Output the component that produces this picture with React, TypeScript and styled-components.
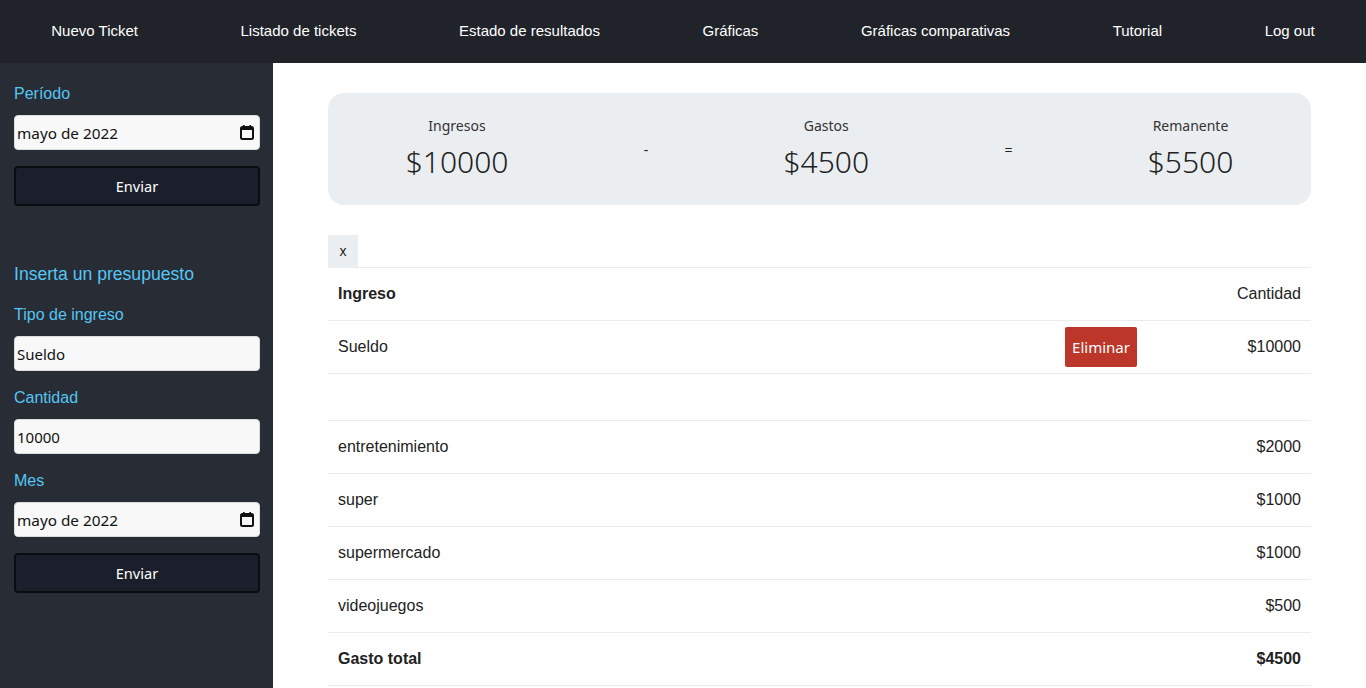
import React from "react";
import styled, { createGlobalStyle } from "styled-components";

const Global = createGlobalStyle`
  html, body { margin: 0; padding: 0; background: #ffffff; }
  body { font-family: "Liberation Sans", Arial, sans-serif; }
  * { box-sizing: border-box; }
`;

const Page = styled.div`
  display: grid;
  grid-template-rows: 63px 1fr;
  min-height: 100vh;
`;

const NavBar = styled.nav`
  background: #20232a;
  display: flex;
  justify-content: space-around;
  align-items: center;
  height: 63px;
`;

const NavLink = styled.a`
  color: #ffffff;
  font-family: "Liberation Sans", Arial, sans-serif;
  font-size: 15px;
  line-height: 18px;
  text-decoration: none;
  cursor: pointer;
  padding-bottom: 2px;
`;

const Body = styled.div`
  display: grid;
  grid-template-columns: 273px 1fr;
`;

const Sidebar = styled.aside`
  background: #282c34;
  padding: 20px 13px 20px 14px;
  display: flex;
  flex-direction: column;
`;

const Form = styled.form`
  display: flex;
  flex-direction: column;
`;

const Heading = styled.h3`
  margin: 57px 0 19px;
  font-family: "Liberation Sans", Arial, sans-serif;
  font-weight: normal;
  font-size: 17.6px;
  line-height: 22px;
  color: #55c6f5;
`;

const Label = styled.label`
  font-family: "Liberation Sans", Arial, sans-serif;
  font-size: 16px;
  line-height: 22px;
  color: #55c6f5;
  margin-bottom: 10px;
`;

const Input = styled.input`
  width: 246px;
  height: 35px;
  border: 1px solid #dcdcdc;
  border-radius: 4px;
  background: #f8f8f8;
  padding: 0 2px;
  font-family: "Noto Sans", "Open Sans", sans-serif;
  font-size: 15px;
  color: #111;
  margin-bottom: 16px;
  outline: none;
`;

const MonthBox = styled.div`
  width: 246px;
  height: 35px;
  border: 1px solid #dcdcdc;
  border-radius: 4px;
  background: #f8f8f8;
  padding: 0 5px 0 2px;
  display: flex;
  align-items: center;
  justify-content: space-between;
  font-family: "Noto Sans", "Open Sans", sans-serif;
  font-size: 15.3px;
  color: #111;
  margin-bottom: 16px;
`;

const SubmitButton = styled.button`
  width: 246px;
  height: 40px;
  background: #1b1f2b;
  border: 2px solid #0b0c10;
  border-radius: 4px;
  color: #ffffff;
  font-family: "Noto Sans", "Open Sans", sans-serif;
  font-size: 14.6px;
  cursor: pointer;
`;

const Main = styled.main`
  padding: 30px 55px 0 55px;
`;

const Summary = styled.section`
  background: #ebeef1;
  border-radius: 16px;
  height: 112px;
  display: flex;
  justify-content: space-around;
  align-items: center;
  padding: 2px 10px 0 10px;
`;

const Stat = styled.div`
  display: flex;
  flex-direction: column;
  align-items: center;
  color: #222;
  font-family: "Noto Sans", "Open Sans", sans-serif;
`;

const StatLabel = styled.span`
  font-size: 14px;
  line-height: 20px;
  color: #333;
`;

const StatValue = styled.span`
  font-size: 30px;
  line-height: 44px;
  margin-top: 4px;
  font-weight: 300;
  color: #222;
`;

const Operator = styled.span`
  font-family: "Noto Sans", "Open Sans", sans-serif;
  font-size: 14px;
  color: #222;
  margin-top: -2px;
`;

const TabButton = styled.button`
  margin-top: 30px;
  width: 30px;
  height: 32px;
  border: none;
  background: #ebeef1;
  font-family: "Liberation Sans", Arial, sans-serif;
  font-size: 14px;
  color: #222;
  padding: 0;
  display: block;
`;

const Table = styled.div`
  border-top: 1px solid #e9ebec;
`;

const Row = styled.div<{ $h?: number; $bold?: boolean }>`
  display: flex;
  align-items: center;
  height: ${(p) => p.$h ?? 53}px;
  border-bottom: 1px solid #e9ebec;
  font-family: "Liberation Sans", Arial, sans-serif;
  font-size: 16px;
  color: #222;
  font-weight: ${(p) => (p.$bold ? "bold" : "normal")};
`;

const NameCell = styled.div`
  flex: 1;
  padding-left: 10px;
`;

const ActionCell = styled.div`
  width: 82px;
  display: flex;
`;

const AmountCell = styled.div<{ $regular?: boolean }>`
  width: 164px;
  text-align: right;
  padding-right: 10px;
  ${(p) => (p.$regular ? "font-weight: normal;" : "")}
`;

const DeleteButton = styled.button`
  width: 72px;
  height: 40px;
  background: #bc3629;
  border: none;
  border-radius: 2px;
  color: #ffffff;
  font-family: "Noto Sans", "Open Sans", sans-serif;
  font-size: 15px;
  padding: 0;
  cursor: pointer;
`;

const CalendarIcon = () => (
  <svg width="14" height="15" viewBox="0 0 14 15" fill="none">
    <rect x="1" y="2" width="12" height="12" rx="1.5" stroke="#111" strokeWidth="2" />
    <rect x="1" y="2" width="12" height="3" fill="#111" />
    <rect x="3" y="0" width="1.6" height="3" fill="#111" />
    <rect x="9.4" y="0" width="1.6" height="3" fill="#111" />
  </svg>
);

const navItems = [
  "Nuevo Ticket",
  "Listado de tickets",
  "Estado de resultados",
  "Gráficas",
  "Gráficas comparativas",
  "Tutorial",
  "Log out",
];

const gastos = [
  { name: "entretenimiento", amount: "$2000" },
  { name: "super", amount: "$1000" },
  { name: "supermercado", amount: "$1000" },
  { name: "videojuegos", amount: "$500" },
];

export default function App() {
  return (
    <>
      <Global />
      <Page>
        <NavBar>
          {navItems.map((n) => (
            <NavLink key={n}>{n}</NavLink>
          ))}
        </NavBar>
        <Body>
          <Sidebar>
            <Form onSubmit={(e) => e.preventDefault()}>
              <Label>Período</Label>
              <MonthBox>
                <span>mayo de 2022</span>
                <CalendarIcon />
              </MonthBox>
              <SubmitButton type="submit">Enviar</SubmitButton>
            </Form>
            <Form onSubmit={(e) => e.preventDefault()}>
              <Heading>Inserta un presupuesto</Heading>
              <Label>Tipo de ingreso</Label>
              <Input defaultValue="Sueldo" />
              <Label>Cantidad</Label>
              <Input defaultValue="10000" />
              <Label>Mes</Label>
              <MonthBox>
                <span>mayo de 2022</span>
                <CalendarIcon />
              </MonthBox>
              <SubmitButton type="submit">Enviar</SubmitButton>
            </Form>
          </Sidebar>
          <Main>
            <Summary>
              <Stat>
                <StatLabel>Ingresos</StatLabel>
                <StatValue>$10000</StatValue>
              </Stat>
              <Operator>-</Operator>
              <Stat>
                <StatLabel>Gastos</StatLabel>
                <StatValue>$4500</StatValue>
              </Stat>
              <Operator>=</Operator>
              <Stat>
                <StatLabel>Remanente</StatLabel>
                <StatValue>$5500</StatValue>
              </Stat>
            </Summary>
            <TabButton>x</TabButton>
            <Table>
              <Row $bold>
                <NameCell>Ingreso</NameCell>
                <AmountCell $regular>Cantidad</AmountCell>
              </Row>
              <Row>
                <NameCell>Sueldo</NameCell>
                <ActionCell>
                  <DeleteButton>Eliminar</DeleteButton>
                </ActionCell>
                <AmountCell>$10000</AmountCell>
              </Row>
              <Row $h={47} />
              {gastos.map((g) => (
                <Row key={g.name}>
                  <NameCell>{g.name}</NameCell>
                  <AmountCell>{g.amount}</AmountCell>
                </Row>
              ))}
              <Row $bold>
                <NameCell>Gasto total</NameCell>
                <AmountCell>$4500</AmountCell>
              </Row>
            </Table>
          </Main>
        </Body>
      </Page>
    </>
  );
}
